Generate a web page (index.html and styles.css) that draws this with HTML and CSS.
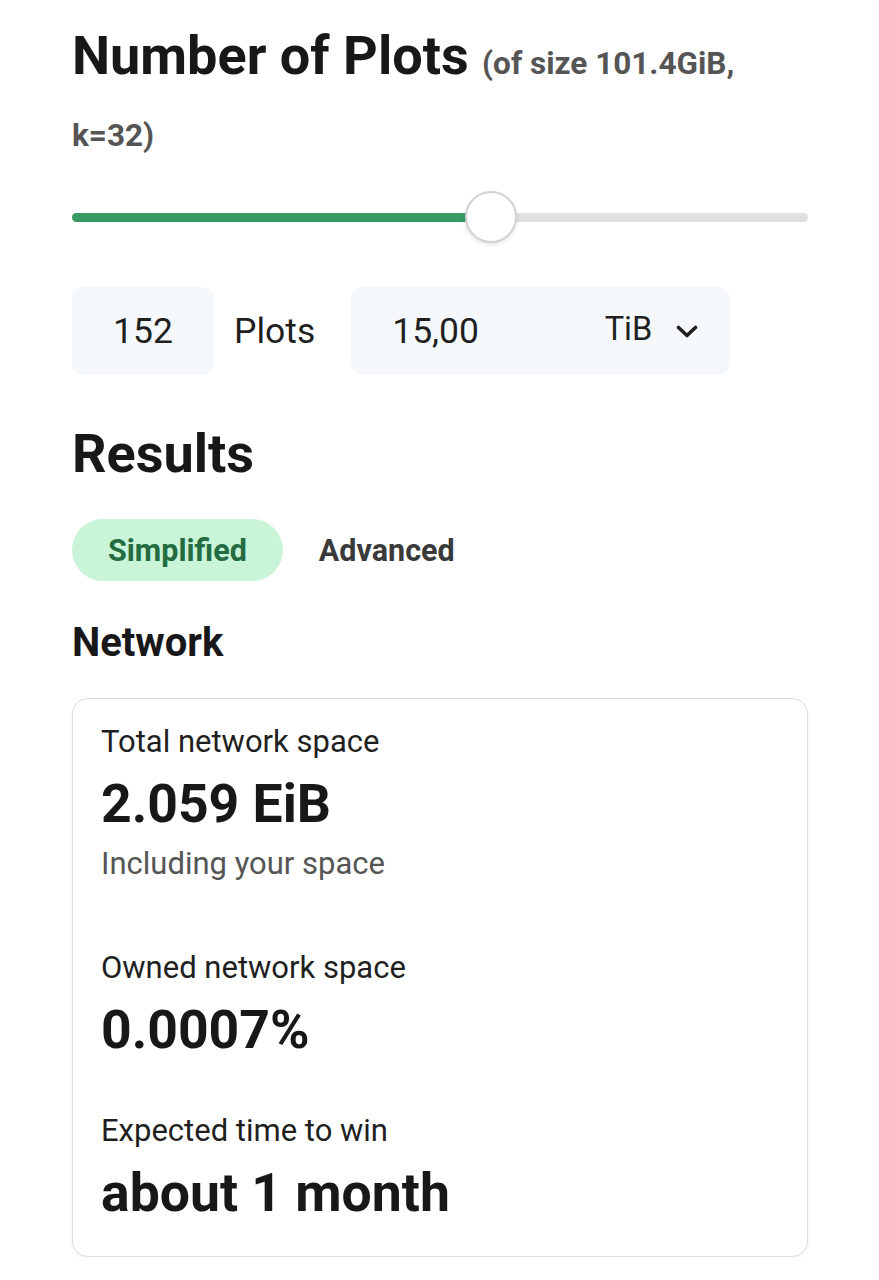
FILE: index.html
```html
<!DOCTYPE html>
<html lang="en">
<head>
<meta charset="utf-8">
<title>Plots calculator</title>
<link rel="stylesheet" href="styles.css">
</head>
<body>
<main class="page">
  <h2 class="title">Number of Plots <span class="title-note">(of size 101.4GiB, k=32)</span></h2>

  <div class="slider">
    <div class="slider-track">
      <div class="slider-fill" style="width:56.9%"></div>
      <div class="slider-thumb" style="left:56.9%"></div>
    </div>
  </div>

  <div class="inputs">
    <div class="field field-count">152</div>
    <span class="field-label">Plots</span>
    <div class="field field-size">
      <span class="size-value">15,00</span>
      <span class="unit">TiB</span>
      <svg class="chevron" viewBox="0 0 22 13" width="22" height="13" aria-hidden="true">
        <polyline points="2.5,2.5 11,10.5 19.5,2.5" fill="none" stroke="#1f1f1f" stroke-width="3.6" stroke-linecap="round" stroke-linejoin="round"/>
      </svg>
    </div>
  </div>

  <h2 class="results">Results</h2>

  <div class="tabs">
    <button class="tab tab-active">Simplified</button>
    <button class="tab">Advanced</button>
  </div>

  <h3 class="section">Network</h3>

  <section class="card">
    <div class="stat stat-first">
      <div class="stat-label">Total network space</div>
      <div class="stat-value">2.059 EiB</div>
      <div class="stat-sub">Including your space</div>
    </div>
    <div class="stat stat-second">
      <div class="stat-label">Owned network space</div>
      <div class="stat-value">0.0007%</div>
    </div>
    <div class="stat">
      <div class="stat-label">Expected time to win</div>
      <div class="stat-value">about 1 month</div>
    </div>
  </section>
</main>
</body>
</html>
```

FILE: styles.css
```css
* { box-sizing: border-box; }

html, body {
  margin: 0;
  padding: 0;
  background: #ffffff;
}

body {
  font-family: Roboto, "Noto Sans", "Liberation Sans", sans-serif;
  color: #1b1b1f;
}

.page {
  padding: 20px 71px 0 72px;
}

.title {
  margin: 0;
  font-size: 54px;
  line-height: 72px;
  font-weight: 700;
  color: #18181b;
}

.title-note {
  font-size: 31.5px;
  line-height: 1;
  font-weight: 700;
  color: #555555;
}

.slider {
  margin-top: 27px;
  height: 52px;
  display: flex;
  align-items: center;
}

.slider-track {
  position: relative;
  width: 100%;
  height: 9px;
  border-radius: 5px;
  background: #e0e0e0;
}

.slider-fill {
  height: 100%;
  border-radius: 5px 0 0 5px;
  background: #389b64;
}

.slider-thumb {
  position: absolute;
  top: 50%;
  width: 52px;
  height: 52px;
  margin-left: -26px;
  margin-top: -26px;
  border-radius: 50%;
  background: #ffffff;
  border: 2px solid #d2d2d2;
  box-shadow: 0 2px 4px rgba(0, 0, 0, 0.1);
}

.inputs {
  margin-top: 44px;
  display: flex;
  align-items: center;
}

.field {
  height: 88px;
  border-radius: 12px;
  background: #f5f8fb;
  display: flex;
  align-items: center;
  font-size: 35.5px;
  color: #1f1f1f;
}

.field-count {
  width: 142px;
  padding-left: 41px;
}

.field-label {
  margin-left: 20px;
  margin-right: 36px;
  font-size: 35.5px;
  color: #1f1f1f;
}

.field-size {
  width: 379px;
  padding-left: 41px;
  padding-right: 32px;
}

.size-value {
  flex: 1;
}

.unit {
  font-size: 32.5px;
  margin-right: 24px;
  position: relative;
  top: -2px;
}

.chevron {
  display: block;
}

.results {
  margin: 47px 0 0;
  font-size: 54px;
  line-height: 64px;
  font-weight: 700;
  color: #18181b;
}

.tabs {
  margin-top: 33px;
  display: flex;
}

.tab {
  height: 62px;
  padding: 0 36px;
  border: 0;
  border-radius: 31px;
  background: transparent;
  font-family: inherit;
  font-size: 30.5px;
  font-weight: 700;
  color: #3a3a3a;
  cursor: pointer;
}

.tab-active {
  background: #c9f4d8;
  color: #236c42;
}

.section {
  margin: 38px 0 0;
  font-size: 40px;
  line-height: 48px;
  font-weight: 700;
  color: #18181b;
}

.card {
  margin-top: 31px;
  border: 1.5px solid #dcdcdc;
  border-radius: 16px;
  padding: 23px 28px 31px;
  box-shadow: 0 2px 3px rgba(0, 0, 0, 0.06);
}

.stat-label {
  font-size: 31px;
  line-height: 40px;
  color: #1f1f1f;
}

.stat-value {
  margin-top: 10px;
  font-size: 53.5px;
  line-height: 64px;
  font-weight: 700;
  color: #18181b;
}

.stat-sub {
  margin-top: 8px;
  font-size: 31px;
  line-height: 40px;
  color: #555555;
}

.stat-first {
  margin-bottom: 64px;
}

.stat-second {
  margin-bottom: 49px;
}
```
